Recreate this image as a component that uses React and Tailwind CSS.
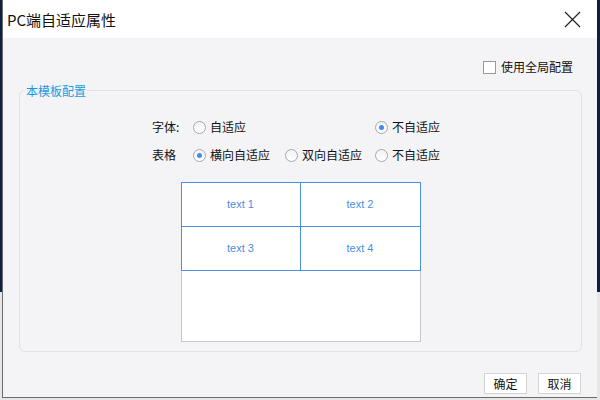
import React, { useState } from 'react';

const Radio = ({ checked, label, onClick, className = '' }) => (
  <label onClick={onClick} className={`flex items-center gap-[4px] cursor-pointer ${className}`}>
    <span className="w-[13px] h-[13px] rounded-full border border-[#a8a8a8] bg-gradient-to-b from-[#f2f2f2] to-white flex items-center justify-center">
      {checked && <span className="w-[5px] h-[5px] rounded-full bg-[#3d8ef0]" />}
    </span>
    <span>{label}</span>
  </label>
);

const App = () => {
  const [font, setFont] = useState('none');
  const [table, setTable] = useState('h');
  const [useGlobal, setUseGlobal] = useState(false);

  return (
    <div className="relative w-[600px] h-[400px] overflow-hidden" style={{ fontFamily: '"Noto Sans CJK SC", "Liberation Sans", sans-serif' }}>
      {/* desktop behind the dialog */}
      <div className="flex flex-col h-full">
        <div className="h-[292px] bg-[#0c2143]" />
        <div className="flex-1 bg-[#e6e6e6]" />
      </div>

      {/* dialog window */}
      <div className="absolute left-[2px] top-0 w-[595px] h-[398px] flex flex-col bg-[#f4f4f6] border-l border-b border-[#6b6b6b]">
        <div className="h-[38px] bg-white flex items-center justify-between pl-[4px] pr-[16px]">
          <span className="text-[15px] text-[#111] leading-none">PC端自适应属性</span>
          <button className="w-[17px] h-[17px] text-[#222]">
            <svg viewBox="0 0 17 17" width="17" height="17" fill="none" stroke="currentColor" strokeWidth="1.2">
              <path d="M1 1L16 16M16 1L1 16" />
            </svg>
          </button>
        </div>

        <div className="flex justify-end pt-[20px] pr-[24px]">
          <label onClick={() => setUseGlobal(!useGlobal)} className="flex items-center gap-[5px] text-[12px] text-[#111] cursor-pointer">
            <span className="w-[13px] h-[13px] border border-[#9a9a9a] bg-white flex items-center justify-center">
              {useGlobal && <span className="w-[7px] h-[7px] bg-[#3d8ef0]" />}
            </span>
            使用全局配置
          </label>
        </div>

        <fieldset className="ml-[16px] mr-[15px] mt-[6px] h-[270px] border border-[#e2e2e6] rounded-[6px]">
          <legend className="ml-[5px] px-[1px] text-[12px] text-[#1a9be0] leading-[17px]">本模板配置</legend>

          <div className="pl-[132px] pt-[18px] text-[12px] text-[#111]">
            <div className="flex items-center h-[20px]">
              <span className="w-[41px]">字体:</span>
              <Radio className="w-[182px]" label="自适应" checked={font === 'auto'} onClick={() => setFont('auto')} />
              <Radio label="不自适应" checked={font === 'none'} onClick={() => setFont('none')} />
            </div>
            <div className="flex items-center h-[20px] mt-[8px]">
              <span className="w-[41px]">表格</span>
              <Radio className="w-[92px]" label="横向自适应" checked={table === 'h'} onClick={() => setTable('h')} />
              <Radio className="w-[90px]" label="双向自适应" checked={table === 'b'} onClick={() => setTable('b')} />
              <Radio label="不自适应" checked={table === 'none'} onClick={() => setTable('none')} />
            </div>
          </div>

          <div className="mx-auto mt-[17px] w-[240px] h-[160px] bg-white border border-[#c8c8c8]">
            <div className="grid grid-cols-2 grid-rows-2 h-[89px] -m-px border border-[#4a8ee6] text-[11px] text-[#4a8ee6]" style={{ fontFamily: '"Liberation Sans", sans-serif' }}>
              <div className="flex items-center justify-center border-r border-b border-[#4a8ee6]">text 1</div>
              <div className="flex items-center justify-center border-b border-[#4a8ee6]">text 2</div>
              <div className="flex items-center justify-center border-r border-[#4a8ee6]">text 3</div>
              <div className="flex items-center justify-center">text 4</div>
            </div>
          </div>
        </fieldset>

        <div className="flex justify-end gap-[11px] pr-[16px] mt-[21px] text-[12px] text-[#111]">
          <button className="w-[43px] h-[21px] bg-white border border-[#d4d4d4]">确定</button>
          <button className="w-[43px] h-[21px] bg-white border border-[#d4d4d4]">取消</button>
        </div>
      </div>
    </div>
  );
};

export default App;
